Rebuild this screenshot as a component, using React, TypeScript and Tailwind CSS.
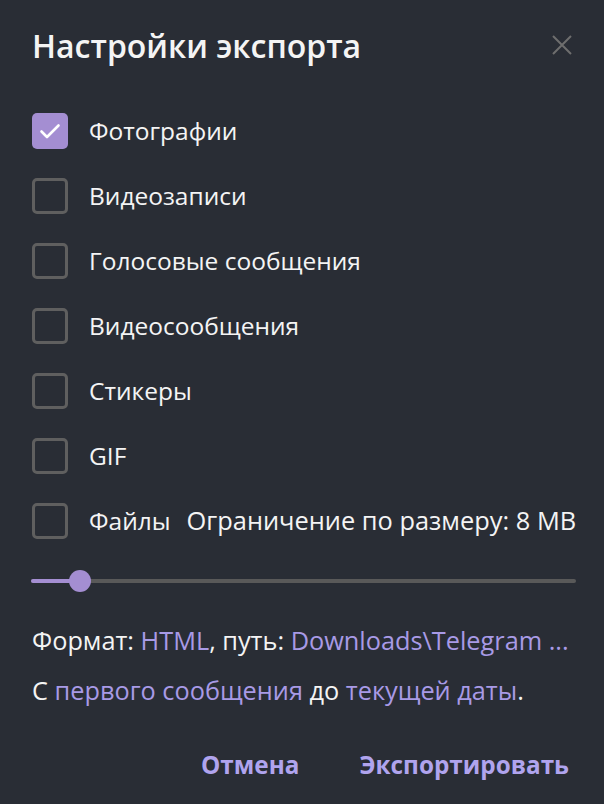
import { useState } from "react";

const items = [
  { id: "photos", label: "Фотографии", checked: true },
  { id: "videos", label: "Видеозаписи", checked: false },
  { id: "voice", label: "Голосовые сообщения", checked: false },
  { id: "round", label: "Видеосообщения", checked: false },
  { id: "stickers", label: "Стикеры", checked: false },
  { id: "gif", label: "GIF", checked: false },
];

function Box({ checked, onClick }: { checked: boolean; onClick: () => void }) {
  return (
    <button
      onClick={onClick}
      className={
        checked
          ? "flex h-9 w-9 shrink-0 items-center justify-center rounded-[5px] bg-[#a48ed2]"
          : "h-9 w-9 shrink-0 rounded-[5px] border-[3px] border-[#5f5f5f]"
      }
    >
      {checked ? (
        <svg width="24" height="24" viewBox="0 0 24 24" fill="none">
          <path d="M3.5 12.5l5.5 5.5L20.5 6.5" stroke="#fff" strokeWidth="2.6" strokeLinecap="round" strokeLinejoin="round" />
        </svg>
      ) : null}
    </button>
  );
}

export default function App() {
  const [state, setState] = useState(items.map((i) => i.checked));
  const [files, setFiles] = useState(false);

  return (
    <div className="h-[804px] w-[604px] bg-[#292d35] font-['Open_Sans','Noto_Sans',sans-serif] text-[#f4f4f4]">
      <div className="flex items-center justify-between pl-[32px] pr-[30px] pt-[24px]">
        <h1 className="text-[32px] font-semibold leading-[44px]">Настройки экспорта</h1>
        <svg width="24" height="24" viewBox="0 0 24 24" className="mt-[-2px]">
          <path d="M3 3l18 18M21 3L3 21" stroke="#6e6e6e" strokeWidth="2" />
        </svg>
      </div>

      <ul className="mt-[45px] flex flex-col gap-[29px] pl-[32px]">
        {items.map((it, i) => (
          <li key={it.id} className="flex h-9 items-center gap-[21px]">
            <Box
              checked={state[i]}
              onClick={() => setState(state.map((v, j) => (j === i ? !v : v)))}
            />
            <span className="text-[24.5px] leading-none">{it.label}</span>
          </li>
        ))}
        <li className="flex h-9 items-center gap-[21px]">
          <Box checked={files} onClick={() => setFiles(!files)} />
          <span className="text-[24.5px] leading-none">Файлы</span>
          <span className="ml-[-5px] text-[25.4px] leading-none">Ограничение по размеру: 8 MB</span>
        </li>
      </ul>

      <div className="relative ml-[31px] mr-[28px] mt-[31px] h-[22px]">
        <div className="absolute left-0 right-0 top-[9px] h-[4px] rounded-full bg-[#595959]" />
        <div className="absolute left-0 top-[9px] h-[4px] w-[49px] rounded-full bg-[#a48ed2]" />
        <div className="absolute left-[38px] top-0 h-[22px] w-[22px] rounded-full bg-[#a48ed2]" />
      </div>

      <p className="mt-[34px] px-[32px] text-[25.3px] leading-[28px]">
        Формат: <span className="text-[#a89ae6]">HTML</span>, путь:{" "}
        <span className="text-[#a89ae6]">Downloads\Telegram ...</span>
      </p>
      <p className="mt-[22px] px-[32px] text-[25.3px] leading-[28px]">
        С <span className="text-[#a89ae6]">первого сообщения</span> до{" "}
        <span className="text-[#a89ae6]">текущей даты</span>.
      </p>

      <div className="mt-[43px] flex justify-end gap-[60px] pr-[35px]">
        <button className="text-[24.3px] font-bold text-[#b0a4ee]">Отмена</button>
        <button className="text-[24.3px] font-bold text-[#b0a4ee]">Экспортировать</button>
      </div>
    </div>
  );
}
